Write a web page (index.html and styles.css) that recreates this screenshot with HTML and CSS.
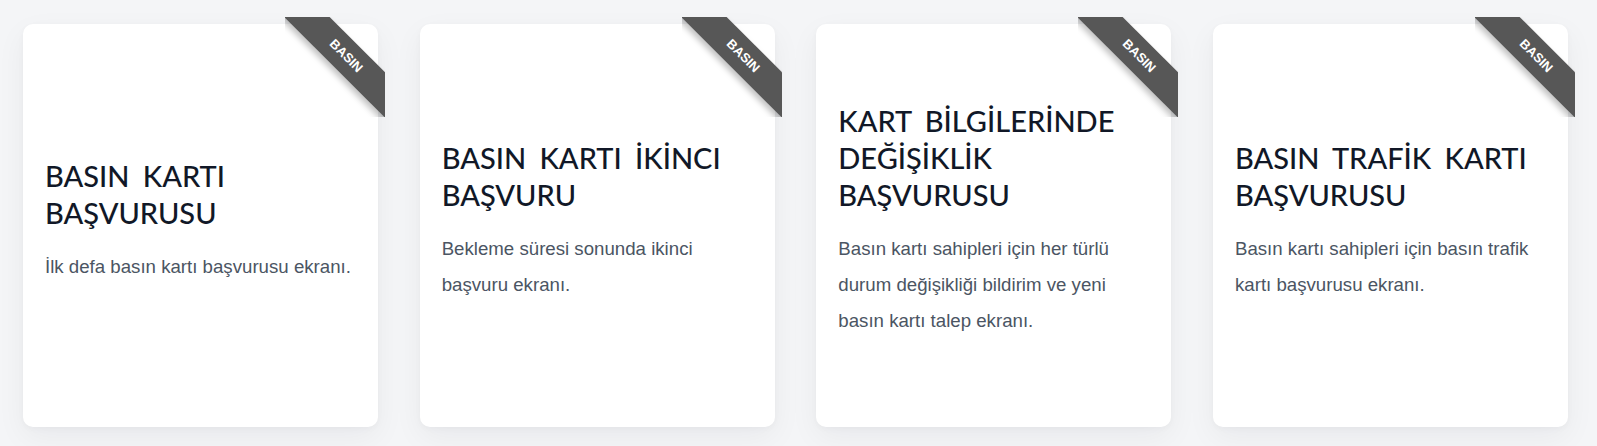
FILE: index.html
```html
<!DOCTYPE html>
<html lang="tr">
<head>
<meta charset="utf-8">
<title>Basın Kartı</title>
<link rel="stylesheet" href="styles.css">
</head>
<body>
<main class="grid">
  <article class="card">
    <div class="ribbon"><span>BASIN</span></div>
    <div class="content">
      <h2 class="title">BASIN KARTI BAŞVURUSU</h2>
      <p class="desc">İlk defa basın kartı başvurusu ekranı.</p>
    </div>
  </article>
  <article class="card">
    <div class="ribbon"><span>BASIN</span></div>
    <div class="content">
      <h2 class="title">BASIN KARTI İKİNCI BAŞVURU</h2>
      <p class="desc">Bekleme süresi sonunda ikinci başvuru ekranı.</p>
    </div>
  </article>
  <article class="card">
    <div class="ribbon"><span>BASIN</span></div>
    <div class="content">
      <h2 class="title">KART BİLGİLERİNDE DEĞİŞİKLİK BAŞVURUSU</h2>
      <p class="desc">Basın kartı sahipleri için her türlü durum değişikliği bildirim ve yeni basın kartı talep ekranı.</p>
    </div>
  </article>
  <article class="card">
    <div class="ribbon"><span>BASIN</span></div>
    <div class="content">
      <h2 class="title">BASIN TRAFİK KARTI BAŞVURUSU</h2>
      <p class="desc">Basın kartı sahipleri için basın trafik kartı başvurusu ekranı.</p>
    </div>
  </article>
</main>
</body>
</html>
```
FILE: styles.css
```css
* { box-sizing: border-box; }
html, body { margin: 0; padding: 0; }
body {
  background: #f4f5f7;
  font-family: "Liberation Sans", Arial, sans-serif;
  width: 1597px;
  height: 446px;
  overflow: hidden;
}
.grid {
  display: grid;
  grid-template-columns: repeat(4, 355px);
  column-gap: 41.67px;
  padding: 24px 29px 0 23px;
}
.card {
  position: relative;
  height: 403px;
  background: #fff;
  border-radius: 10px;
  box-shadow: 0 10px 30px rgba(17, 24, 39, 0.05), 0 2px 6px rgba(17, 24, 39, 0.03);
  display: flex;
  flex-direction: column;
  justify-content: center;
  padding: 0 22px;
}
.content { padding-bottom: 10px; }
.title {
  margin: 0;
  font-family: Lato, "Liberation Sans", sans-serif;
  font-weight: 500;
  font-size: 29px;
  line-height: 37px;
  word-spacing: 6px;
  color: #111827;
}
.desc {
  margin: 18px 0 0;
  font-size: 18.67px;
  line-height: 36px;
  color: #4b5563;
}
.ribbon {
  position: absolute;
  top: -7px;
  right: -7px;
  width: 100px;
  height: 100px;
  overflow: hidden;
}
.ribbon span {
  position: absolute;
  left: -19px;
  top: 22.5px;
  width: 160px;
  height: 32px;
  line-height: 32px;
  text-align: center;
  background: #575757;
  color: #fff;
  font-family: "Liberation Sans", Arial, sans-serif;
  font-weight: 700;
  font-size: 13px;
  transform: rotate(45deg);
  box-shadow: 0 4px 6px rgba(0, 0, 0, 0.25);
}
```
